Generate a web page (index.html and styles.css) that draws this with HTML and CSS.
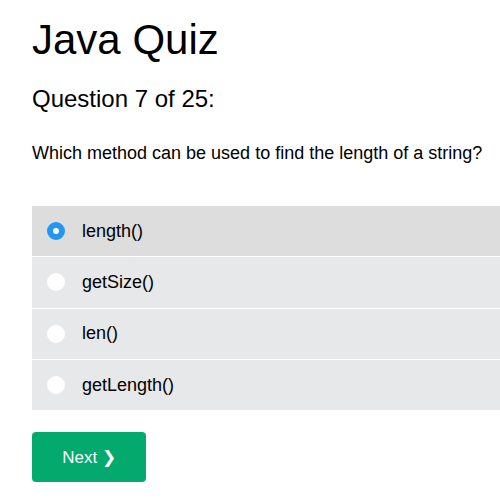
FILE: index.html
```html
<!DOCTYPE html>
<html>
<head>
<meta charset="utf-8">
<link rel="stylesheet" href="styles.css">
</head>
<body>
<div class="quiz">
  <h1 class="title">Java Quiz</h1>
  <h2 class="counter">Question 7 of 25:</h2>
  <p class="question">Which method can be used to find the length of a string?</p>
  <div class="options">
    <label class="option selected"><span class="radio"></span><span class="opt-text">length()</span></label>
    <label class="option"><span class="radio"></span><span class="opt-text">getSize()</span></label>
    <label class="option"><span class="radio"></span><span class="opt-text">len()</span></label>
    <label class="option"><span class="radio"></span><span class="opt-text">getLength()</span></label>
  </div>
  <button class="next">Next ❯</button>
</div>
</body>
</html>
```
FILE: styles.css
```css
html, body {
  margin: 0;
  padding: 0;
  background: #fff;
  overflow: hidden;
}
body {
  font-family: "Liberation Sans", Arial, sans-serif;
  color: #000;
}
.quiz {
  padding: 16px 0 0 32px;
}
.title {
  margin: 0;
  font-size: 42px;
  font-weight: normal;
  line-height: 48px;
}
.counter {
  margin: 21px 0 0;
  font-size: 24px;
  font-weight: normal;
  line-height: 28px;
}
.question {
  margin: 30px 0 0;
  font-size: 18px;
  line-height: 21px;
}
.options {
  margin-top: 42px;
  display: flex;
  flex-direction: column;
}
.option {
  display: flex;
  align-items: center;
  height: 50.3px;
  border-bottom: 1px solid #fff;
  background: #e7e8e9;
  font-size: 18px;
}
.option.selected {
  background: #dddddd;
}
.radio {
  width: 18px;
  height: 18px;
  border-radius: 50%;
  background: #fff;
  margin-left: 15px;
  box-sizing: border-box;
}
.selected .radio {
  background: #fff;
  border: 6px solid #2196f3;
}
.opt-text {
  margin-left: 17px;
}
.next {
  margin-top: 21px;
  width: 114px;
  height: 50px;
  border: none;
  border-radius: 4px;
  background: #04aa6d;
  color: #fff;
  font-family: "Liberation Sans", Arial, sans-serif;
  font-size: 17px;
  padding: 0;
}
```
